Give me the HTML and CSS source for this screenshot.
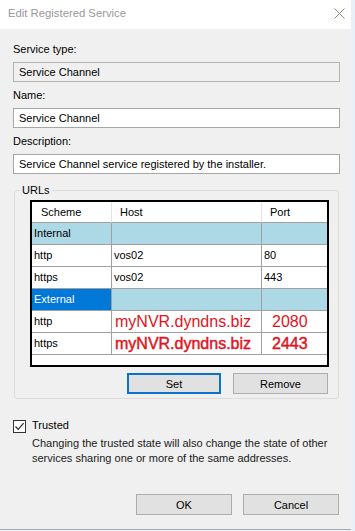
FILE: index.html
```html
<!DOCTYPE html>
<html lang="en">
<head>
<meta charset="utf-8">
<title>Edit Registered Service</title>
<link rel="stylesheet" href="styles.css">
</head>
<body>
<div class="window">
  <div class="titlebar">
    <span class="title">Edit Registered Service</span>
    <svg class="close" width="11" height="11" viewBox="0 0 11 11"><path d="M0.5 0.5 L10.5 10.5 M10.5 0.5 L0.5 10.5" stroke="#8a8a8a" stroke-width="1" fill="none"/></svg>
  </div>
  <div class="content">
    <div class="label">Service type:</div>
    <div class="field disabled">Service Channel</div>
    <div class="label">Name:</div>
    <div class="field">Service Channel</div>
    <div class="label">Description:</div>
    <div class="field">Service Channel service registered by the installer.</div>

    <fieldset class="group">
      <legend>URLs</legend>
      <div class="grid">
        <div class="row head">
          <div class="cell">Scheme</div><div class="cell">Host</div><div class="cell">Port</div>
        </div>
        <div class="row section">
          <div class="cell">Internal</div><div class="cell"></div><div class="cell"></div>
        </div>
        <div class="row">
          <div class="cell">http</div><div class="cell">vos02</div><div class="cell">80</div>
        </div>
        <div class="row">
          <div class="cell">https</div><div class="cell">vos02</div><div class="cell">443</div>
        </div>
        <div class="row section">
          <div class="cell selected">External</div><div class="cell"></div><div class="cell"></div>
        </div>
        <div class="row">
          <div class="cell">http</div><div class="cell red">myNVR.dyndns.biz</div><div class="cell red port">2080</div>
        </div>
        <div class="row">
          <div class="cell">https</div><div class="cell red heavy">myNVR.dyndns.biz</div><div class="cell red heavy port">2443</div>
        </div>
      </div>
      <div class="group-actions">
        <button class="btn focused btn-set">Set</button>
        <button class="btn btn-remove">Remove</button>
      </div>
    </fieldset>

    <div class="trusted">
      <span class="checkbox">
        <svg width="11" height="11" viewBox="0 0 11 11"><path d="M1.5 5.5 L4.2 8.3 L9.6 2.2" stroke="#2b2b2b" stroke-width="1.2" fill="none"/></svg>
      </span>
      <div class="trusted-text">
        <div class="trusted-label">Trusted</div>
        <p class="note">Changing the trusted state will also change the state of other services sharing one or more of the same addresses.</p>
      </div>
    </div>

    <div class="dialog-actions">
      <button class="btn btn-dialog">OK</button>
      <button class="btn btn-dialog">Cancel</button>
    </div>
  </div>
</div>
</body>
</html>
```
FILE: styles.css
```css
* { box-sizing: border-box; }

html, body {
  margin: 0;
  padding: 0;
  background: #eaf0f7;
  font-family: "Liberation Sans", Arial, sans-serif;
  font-size: 11px;
  color: #000;
}

.window {
  width: 351px;
  height: 530px;
  background: #f0f0f0;
  border-bottom: 1px solid #a9a9a9;
  display: flex;
  flex-direction: column;
}

.titlebar {
  height: 29px;
  background: #fff;
  display: flex;
  align-items: center;
  justify-content: space-between;
  padding: 0 6px 2px 8px;
  flex: none;
}

.title {
  color: #999;
  font-size: 11.3px;
  line-height: 13px;
}

.close { display: block; margin-top: -1px; }

.content {
  display: flex;
  flex-direction: column;
  padding: 7px 11px 0 13px;
  flex: 1;
}

.label {
  line-height: 13px;
  margin-top: 7px;
  margin-bottom: 6px;
}

.field {
  height: 20px;
  line-height: 18px;
  border: 1px solid #a6a6a6;
  background: #fff;
  padding: 0 5px;
  white-space: nowrap;
}

.field.disabled {
  background: #f0f0f0;
  border-color: #b4b4b4;
}

.group {
  margin: 10px 1px 0 1px;
  border: 1px solid #dcdcdc;
  border-radius: 3px;
  padding: 3px 9px 4px 15px;
  min-width: 0;
}

.group legend {
  padding: 0 2px;
  margin-left: -10px;
  line-height: 13px;
  font-size: 11px;
}

.grid {
  width: 299px;
  height: 167px;
  border: 2px solid #000;
  background: #fff;
}

.row {
  display: grid;
  grid-template-columns: 80px 150px 65px;
  height: 22px;
}

.cell {
  border-right: 1px solid #a0a0a0;
  border-bottom: 1px solid #a0a0a0;
  padding-left: 2px;
  line-height: 21px;
  white-space: nowrap;
  overflow: hidden;
}

.cell:last-child { border-right: none; }

.row.head { height: 21px; }
.row.head .cell {
  line-height: 20px;
  padding-left: 9px;
  border-right-color: #e3e3e3;
}
.row.head .cell:nth-child(2),
.row.head .cell:nth-child(3) { padding-left: 8px; }

.row.section .cell { background: #add8e6; }
.row.section .cell.selected { background: #0078d7; color: #fff; }

.cell.red {
  color: #e2131d;
  font-size: 16px;
  padding-left: 3px;
  line-height: 22px;
}

.cell.red.heavy {
  -webkit-text-stroke: 0.45px #e2131d;
}

.cell.red.port { padding-left: 10px; }

.group-actions {
  display: flex;
  justify-content: flex-end;
  gap: 12px;
  margin-top: 6px;
  padding-right: 1px;
}

.btn {
  font-family: "Liberation Sans", Arial, sans-serif;
  font-size: 11px;
  color: #000;
  height: 21px;
  background: #e1e1e1;
  border: 1px solid #adadad;
  border-radius: 0;
  padding: 0;
  margin: 0;
}

.btn.focused { border: 2px solid #0a72c8; }
.btn-set { width: 94px; }
.btn-remove { width: 95px; }

.trusted {
  display: flex;
  gap: 6px;
  margin-top: 20px;
}

.checkbox {
  width: 13px;
  height: 13px;
  margin-top: 1px;
  border: 1px solid #333;
  background: #fff;
  display: flex;
  align-items: center;
  justify-content: center;
  flex: none;
}

.checkbox svg { display: block; }

.trusted-label { line-height: 13px; }

.note {
  margin: 4px 0 0 0;
  line-height: 15px;
  color: #1a1a1a;
}

.dialog-actions {
  display: flex;
  justify-content: flex-end;
  gap: 11px;
  margin-top: 28px;
  padding-right: 1px;
}

.btn-dialog { width: 96px; }
```
